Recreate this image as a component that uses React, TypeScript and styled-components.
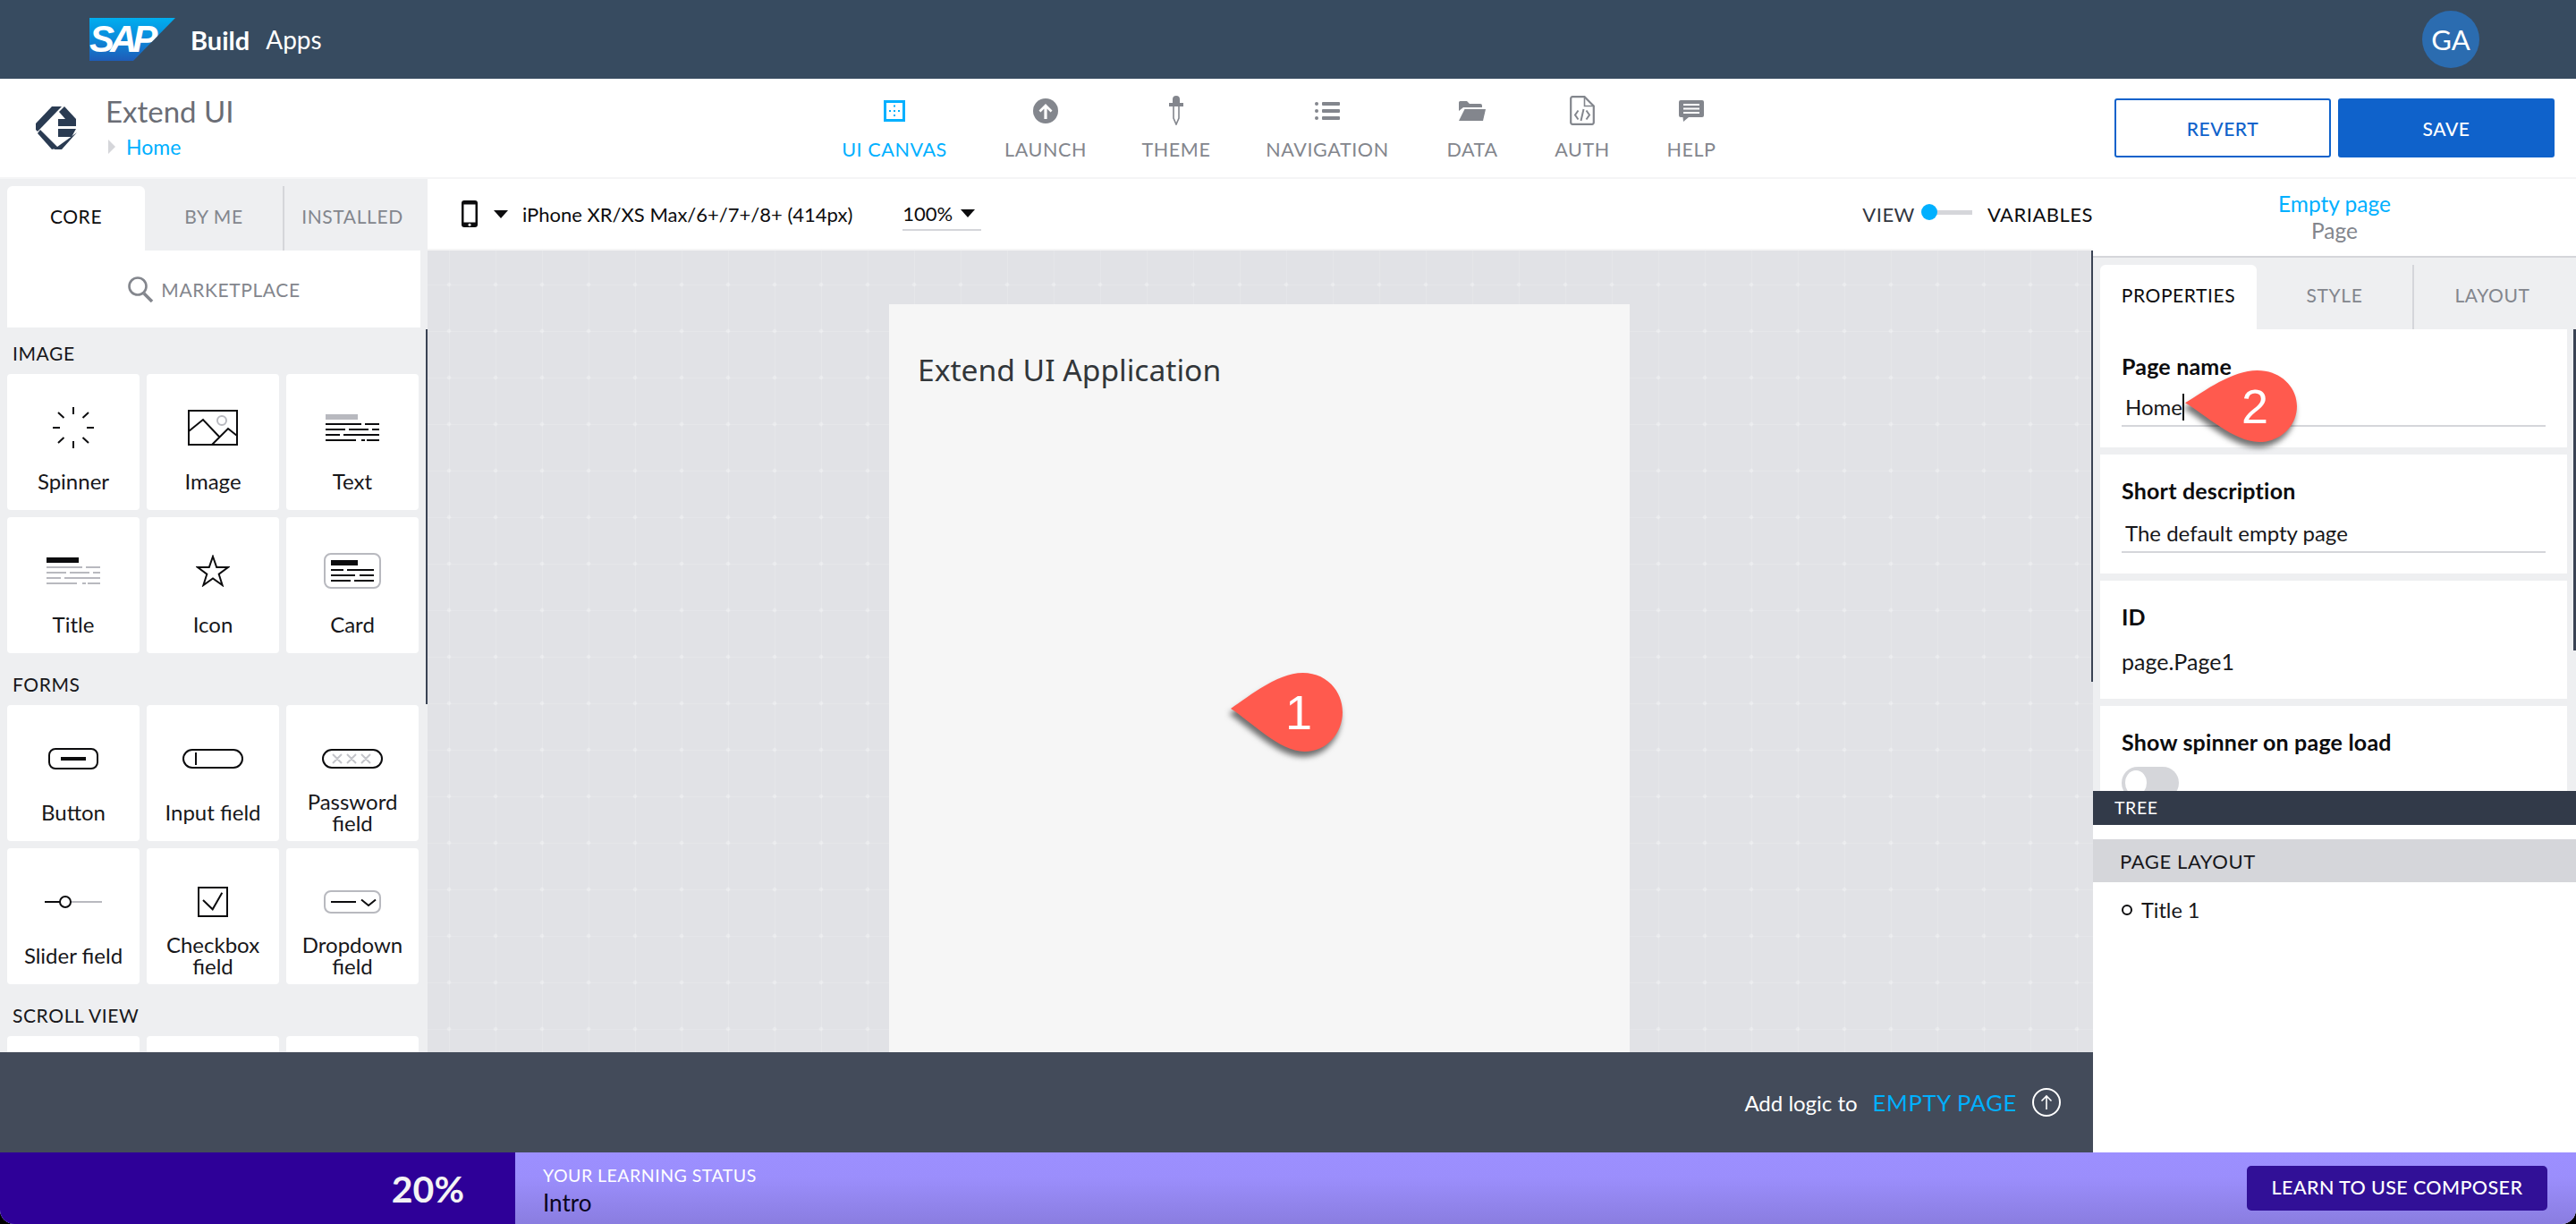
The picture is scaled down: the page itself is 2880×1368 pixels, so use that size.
import React from "react";
import styled, { createGlobalStyle } from "styled-components";

const Global = createGlobalStyle`
  html, body { margin: 0; padding: 0; background: #000; }
  * { box-sizing: border-box; }
  body { font-family: "Lato", "Open Sans", sans-serif; }
`;

const Shell = styled.div`
  width: 2880px; height: 1368px; display: flex; flex-direction: column;
  overflow: hidden; border-radius: 0 0 16px 16px; background: #fff; color: #0c0c0e;
`;

/* ---------- top bar ---------- */
const TopBar = styled.header`
  height: 88px; flex: none; background: #374b60; display: flex; align-items: center;
  padding: 0 108px 0 100px; color: #fff;
`;
const SapLogo = styled.div`
  position: relative; width: 96px; height: 48px; display: flex; align-items: center; padding-left: 0;
  background: linear-gradient(180deg, #00aeef 0%, #0a8ddc 45%, #1e5cb8 100%);
  clip-path: polygon(0 0, 100% 0, 51% 100%, 0 100%);
  font: italic 700 42px/1 "Liberation Sans", sans-serif; letter-spacing: -5px; color: #fff;
`;
const ProductBold = styled.span`font-size: 29px; font-weight: 700; margin-left: 17px;`;
const Product = styled.span`font-size: 28px; margin-left: 18px;`;
const Avatar = styled.div`
  margin-left: auto; width: 64px; height: 64px; border-radius: 50%; background: #2b6cb0;
  display: flex; align-items: center; justify-content: center; font-size: 31px;
`;

/* ---------- app bar ---------- */
const AppBar = styled.div`
  height: 112px; flex: none; display: flex; align-items: center;
  border-bottom: 2px solid #f5f5f6; background: #fff;
`;
const Brand = styled.div`width: 909px; flex: none; display: flex; align-items: center; padding-left: 40px; gap: 32px;`;
const BrandText = styled.div`display: flex; flex-direction: column; gap: 11px; margin-top: -2px;`;
const AppName = styled.div`font-size: 33px; line-height: 32px; color: #6a6d75;`;
const Crumb = styled.div`display: flex; align-items: center; gap: 12px; font-size: 23px; line-height: 26px; color: #00b0ff; padding-left: 3px;`;
const CrumbArrow = styled.i`
  width: 0; height: 0; border-left: 8px solid #d5d6da; border-top: 8px solid transparent; border-bottom: 8px solid transparent;
`;
const Nav = styled.nav`display: flex; align-items: stretch;`;
const NavItem = styled.div<{ $w: number; $active?: boolean }>`
  width: ${p => p.$w}px; display: flex; flex-direction: column; align-items: center; 
  color: ${p => (p.$active ? "#00b0ff" : "#83868d")}; font-size: 21.5px; line-height: 26px; letter-spacing: 0.6px;
`;
const NavIcon = styled.div`height: 38px; margin: -2px 0 11px; display: flex; align-items: center; justify-content: center;`;
const Actions = styled.div`margin-left: auto; display: flex; gap: 8px; padding-right: 24px;`;
const ActionButton = styled.button<{ $primary?: boolean }>`
  width: 242px; height: 66px; border-radius: 3px; border: 2px solid #0f62cb;
  background: ${p => (p.$primary ? "#0f62cb" : "#fff")}; color: ${p => (p.$primary ? "#fff" : "#0f62cb")};
  font: 500 21px/1 "Lato", sans-serif; letter-spacing: 0.6px;
`;

/* ---------- workspace ---------- */
const Workspace = styled.div`flex: 1; min-height: 0; display: flex;`;
const Main = styled.div`width: 2340px; flex: none; display: flex; flex-direction: column;`;
const MainBody = styled.div`flex: 1; min-height: 0; display: flex;`;

/* left panel */
const LeftPanel = styled.aside`
  position: relative; width: 478px; flex: none; background: #eeeff1; overflow: hidden; padding: 8px 0 0;
`;
const Tabs = styled.div<{ $cols: string }>`
  display: grid; grid-template-columns: ${p => p.$cols}; height: 72px;
`;
const Tab = styled.div<{ $active?: boolean; $divider?: boolean }>`
  display: flex; align-items: center; justify-content: center; padding-bottom: 6px;
  font-size: 21px; letter-spacing: 0.6px; color: ${p => (p.$active ? "#0c0c0e" : "#83868d")};
  background: ${p => (p.$active ? "#fff" : "transparent")};
  border-radius: ${p => (p.$active ? "6px 6px 0 0" : "0")};
  border-left: ${p => (p.$divider ? "2px solid #d5d6da" : "0")};
`;
const LeftTabs = styled(Tabs)`margin: 0 0 0 8px;`;
const Market = styled.div`
  margin: 0 8px; height: 86px; background: #fff; display: flex; align-items: center; justify-content: center;
  gap: 8px; font-size: 21px; letter-spacing: 0.6px; color: #83868d;
`;
const GroupLabel = styled.div<{ $first?: boolean }>`
  height: ${p => (p.$first ? 52 : 58)}px; padding: ${p => (p.$first ? 16 : 22)}px 0 0 14px;
  font-size: 21px; line-height: 26px; letter-spacing: 0.6px; color: #17171a;
`;
const WidgetGrid = styled.div`
  display: grid; grid-template-columns: repeat(3, 148px); grid-auto-rows: 152px; gap: 8px; padding-left: 8px;
`;
const WidgetCard = styled.div`
  background: #fff; border-radius: 4px; display: grid; grid-template-rows: 96px 48px; justify-items: center;
`;
const WidgetIcon = styled.div`padding-top: 24px; display: flex; align-items: center; justify-content: center;`;
const WidgetLabel = styled.div`
  display: flex; align-items: center; text-align: center; justify-content: center;
  font-size: 24px; line-height: 24px; color: #17171a; width: 124px;
`;
const ScrollMark = styled.div<{ $side: "left" | "right"; $top: number; $h: number; $w: number }>`
  position: absolute; ${p => p.$side}: 0; top: ${p => p.$top}px; height: ${p => p.$h}px; width: ${p => p.$w}px; background: #3a4354;
`;

/* center */
const Center = styled.div`flex: 1; min-width: 0; display: flex; flex-direction: column;`;
const CanvasBar = styled.div`
  height: 80px; flex: none; display: flex; align-items: center; padding: 0 0 0 38px; background: #fff;
  font-size: 22px; color: #0c0c0e; border-bottom: 2px solid #f5f5f6;
`;
const Caret = styled.i`
  display: block; width: 0; height: 0; border-left: 8px solid transparent; border-right: 8px solid transparent; border-top: 9px solid #0c0c0e;
`;
const DeviceGroup = styled.div`display: flex; align-items: center; gap: 18px;`;
const DeviceText = styled.span`margin-left: -2px; font-size: 22px;`;
const Zoom = styled.div`
  margin-left: 56px; width: 88px; height: 38px; display: flex; align-items: center; gap: 9px;
  border-bottom: 2px solid #d5d6da; font-size: 22px;
`;
const Switcher = styled.div`margin-left: auto; display: flex; align-items: center; font-size: 22px; letter-spacing: 0.5px;`;
const SwitcherView = styled.span`color: #32363f;`;
const Track = styled.div`
  position: relative; width: 56px; height: 5px; margin: 0 17px 4px 8px; background: #d5d6da;
  &::before { content: ""; position: absolute; left: -1px; top: -7px; width: 18px; height: 18px; border-radius: 50%; background: #00b0ff; }
`;
const Canvas = styled.div`
  position: relative; flex: 1; min-height: 0; overflow: hidden; display: flex; justify-content: center; padding-top: 60px;
  background-color: #e1e2e6;
  background-image:
    radial-gradient(circle, rgba(255,255,255,.28) 0, rgba(255,255,255,.28) 1.5px, transparent 3px),
    linear-gradient(rgba(255,255,255,.13) 1px, transparent 1px),
    linear-gradient(90deg, rgba(255,255,255,.13) 1px, transparent 1px);
  background-size: 52px 52px;
  background-position: -2px 12px, 0 38px, 24px 0;
`;
const Phone = styled.div`width: 828px; height: 1100px; flex: none; margin-right: 2px; background: #f6f6f6; padding: 50px 0 0 32px;`;
const PhoneTitle = styled.h1`margin: 0; font: 400 33.6px/46px "Noto Sans", sans-serif; color: #32363a;`;

const LogicBar = styled.div`
  height: 112px; flex: none; background: #434b5a; display: flex; align-items: center; justify-content: flex-end;
  padding-right: 36px; color: #fff; font-size: 24px;
`;
const LogicLink = styled.span`margin-left: 17px; color: #00b0ff; font-size: 25.5px; letter-spacing: 0.7px;`;
const LogicArrow = styled.span`margin-left: 17px; display: flex;`;

/* right panel */
const RightPanel = styled.aside`width: 540px; flex: none; display: flex; flex-direction: column; background: #fff;`;
const Inspect = styled.div`
  height: 88px; flex: none; border-bottom: 2px solid #d5d6da; display: flex; flex-direction: column; align-items: center;
  padding-top: 13px; font-size: 24.5px; line-height: 30px;
`;
const InspectName = styled.div`color: #00b0ff;`;
const InspectType = styled.div`color: #83868d;`;
const PropsArea = styled.div`position: relative; height: 596px; flex: none; background: #eeeff1; overflow: hidden; padding-top: 8px;`;
const RightTabs = styled(Tabs)`margin-left: 8px;`;
const PropCards = styled.div`display: flex; flex-direction: column; gap: 8px; width: 522px; margin-left: 8px;`;
const PropCard = styled.section<{ $h: number }>`
  height: ${p => p.$h}px; flex: none; background: #fff; padding: 0 24px;
`;
const PropLabel = styled.div<{ $top: number }>`
  padding-top: ${p => p.$top}px; font-size: 25px; line-height: 28px; font-weight: 700; letter-spacing: 0.2px; color: #0c0c0e;
`;
const PropValue = styled.div<{ $top: number; $indent?: number; $size: number }>`
  margin-top: ${p => p.$top}px; padding: 0 0 5px ${p => p.$indent ?? 0}px; font-size: ${p => p.$size}px; line-height: 30px; color: #17171a;
`;
const InputValue = styled(PropValue)`border-bottom: 2px solid #d5d6da;`;
const TextCaret = styled.span`display: inline-block; width: 0; height: 30px; border-left: 2px solid #111; vertical-align: top;`;
const Toggle = styled.div`
  margin-top: 14px; width: 64px; height: 36px; border-radius: 18px; background: #d5d6da; position: relative;
  &::after { content: ""; position: absolute; left: 4px; top: 4px; width: 24px; height: 28px; border-radius: 50%; background: #fff; }
`;
const TreeBar = styled.div`
  height: 38px; flex: none; background: #323a49; color: #fff; font-size: 19.5px; letter-spacing: 0.6px;
  display: flex; align-items: center; padding: 0 0 2px 24px;
`;
const LayoutHead = styled.div`
  margin-top: 16px; height: 48px; flex: none; background: #d5d6da; display: flex; align-items: center;
  padding-left: 30px; font-size: 22px; letter-spacing: 0.6px; color: #17171a;
`;
const TreeRow = styled.div`display: flex; align-items: center; gap: 10px; padding: 17px 0 0 32px; font-size: 23.5px; line-height: 28px; color: #17171a;`;
const TreeDot = styled.i`width: 12px; height: 12px; border-radius: 50%; border: 2px solid #0c0c0e;`;

/* learning bar */
const LearnBar = styled.footer`
  height: 80px; flex: none; display: flex; align-items: stretch;
  background: linear-gradient(180deg, #9c8fff 0%, #9b8efc 35%, #8a7de0 100%);
`;
const Progress = styled.div`
  width: 576px; flex: none; background: #2e0098; color: #f4f4f4; display: flex; align-items: center; justify-content: flex-end;
  padding: 0 57px 0 0; font-size: 41px; font-weight: 700;
`;
const Status = styled.div`display: flex; flex-direction: column; padding: 14px 0 0 31px;`;
const StatusLabel = styled.div`font-size: 19.5px; line-height: 24px; letter-spacing: 0.5px; color: #fff;`;
const StatusValue = styled.div`margin-top: 2px; font-size: 26px; line-height: 32px; color: #0a0520;`;
const LearnButton = styled.button`
  margin: 15px 32px 15px auto; width: 336px; border: 0; border-radius: 5px; background: #311097; color: #fff;
  font: 500 21.5px/1 "Lato", sans-serif; letter-spacing: 0.4px;
`;

/* callouts */
const Callout = styled.div<{ $x: number; $y: number; $w: number; $h: number }>`
  position: absolute; left: ${p => p.$x}px; top: ${p => p.$y}px; width: ${p => p.$w}px; height: ${p => p.$h}px;
  display: flex; align-items: center; justify-content: flex-end;
`;
const CalloutShape = styled.svg`
  position: absolute; inset: 0; width: 100%; height: 100%; overflow: visible;
  filter: drop-shadow(-2px 6px 3px rgba(0,0,0,.55));
`;
const CalloutNumber = styled.span<{ $pad: number }>`
  position: relative; padding-right: ${p => p.$pad}px; font: 400 54px/1 "Liberation Sans", sans-serif; color: #fff;
`;
const Stage = styled.div`position: relative; width: 2880px; height: 1368px;`;

/* ---------- icons ---------- */
const Lines = ({ bar, line }: { bar: string; line: string }) => (
  <svg width="60" height="30" viewBox="0 0 60 30">
    <rect width="36" height="6" fill={bar} />
    <g stroke={line} strokeWidth="2">
      <path d="M0 11H40M44 11H60M0 17H22M26 17H48M52 17H60M0 23H16M20 23H60M0 29H34M40 29H44M46 29H60" />
    </g>
  </svg>
);
const icons: Record<string, React.ReactNode> = {
  Spinner: (
    <svg width="46" height="46" viewBox="0 0 46 46" stroke="#0c0c0e" strokeWidth="2" fill="none">
      <path d="M23 0V8M23 38V46M0 23H8M38 23H46M6 6L12.5 12M40 6L33.5 12M6 40L12.5 34M40 40L33.5 34" />
    </svg>
  ),
  Image: (
    <svg width="56" height="40" viewBox="0 0 56 40" fill="none" stroke="#0c0c0e" strokeWidth="2">
      <rect x="1" y="1" width="54" height="38" />
      <path d="M1 24L17 11L35 30M27 39L45 21L55 29" />
      <circle cx="38" cy="12" r="5" stroke="#b8b9bf" />
    </svg>
  ),
  Text: <Lines bar="#b8b9bf" line="#0c0c0e" />,
  Title: <Lines bar="#0c0c0e" line="#b8b9bf" />,
  Icon: (
    <svg width="38" height="36" viewBox="0 0 38 36" fill="none" stroke="#0c0c0e" strokeWidth="2">
      <path d="M19 2L23.2 14H36L25.7 21.7L29.6 34L19 26.5L8.4 34L12.3 21.7L2 14H14.8Z" />
    </svg>
  ),
  Card: (
    <svg width="64" height="40" viewBox="0 0 64 40" fill="none">
      <rect x="1" y="1" width="62" height="38" rx="7" stroke="#b8b9bf" strokeWidth="2" />
      <rect x="8" y="8" width="30" height="6" fill="#0c0c0e" />
      <path d="M8 19H22M26 19H56M8 25H35M40 25H56M8 31H30M34 31H56" stroke="#0c0c0e" strokeWidth="2" />
    </svg>
  ),
  Button: (
    <svg width="56" height="24" viewBox="0 0 56 24" fill="none">
      <rect x="1" y="1" width="54" height="22" rx="7" stroke="#0c0c0e" strokeWidth="2" />
      <rect x="14" y="10" width="28" height="4" fill="#0c0c0e" />
    </svg>
  ),
  "Input field": (
    <svg width="68" height="22" viewBox="0 0 68 22" fill="none" stroke="#0c0c0e" strokeWidth="2">
      <rect x="1" y="1" width="66" height="20" rx="10" />
      <path d="M15 4V18" />
    </svg>
  ),
  "Password field": (
    <svg width="68" height="22" viewBox="0 0 68 22" fill="none">
      <rect x="1" y="1" width="66" height="20" rx="10" stroke="#0c0c0e" strokeWidth="2" />
      <path d="M12 6L22 16M22 6L12 16M28 6L38 16M38 6L28 16M44 6L54 16M54 6L44 16" stroke="#c4c5ca" strokeWidth="2" />
    </svg>
  ),
  "Slider field": (
    <svg width="64" height="14" viewBox="0 0 64 14" fill="none">
      <path d="M0 7H17" stroke="#0c0c0e" strokeWidth="2" />
      <path d="M29 7H64" stroke="#b8b9bf" strokeWidth="2" />
      <circle cx="23" cy="7" r="6" stroke="#0c0c0e" strokeWidth="2" />
    </svg>
  ),
  "Checkbox field": (
    <svg width="34" height="34" viewBox="0 0 34 34" fill="none" stroke="#0c0c0e" strokeWidth="2">
      <rect x="1" y="1" width="32" height="32" />
      <path d="M6 15L16.7 25.3L27.3 6.7" />
    </svg>
  ),
  "Dropdown field": (
    <svg width="64" height="26" viewBox="0 0 64 26" fill="none">
      <rect x="1" y="1" width="62" height="24" rx="7" stroke="#b8b9bf" strokeWidth="2" />
      <path d="M8 13H36M42 10.5L50 17L58 10.5" stroke="#0c0c0e" strokeWidth="2" />
    </svg>
  ),
};

const navItems: { label: string; w: number; active?: boolean; icon: React.ReactNode }[] = [
  {
    label: "UI CANVAS", w: 182, active: true,
    icon: (
      <svg width="24" height="24" viewBox="0 0 24 24">
        <rect x="1.5" y="1.5" width="21" height="21" fill="none" stroke="#00b0ff" strokeWidth="3" />
        <path d="M11 5.5h2v2h-2zM11 11h2v2h-2zM11 16h2v2h-2zM6 11h2v2H6zM16 11h2v2h-2z" fill="#00b0ff" />
      </svg>
    ),
  },
  {
    label: "LAUNCH", w: 156,
    icon: (
      <svg width="28" height="28" viewBox="0 0 28 28">
        <circle cx="14" cy="14" r="14" fill="#83868d" />
        <path d="M14 6L21.5 13.5L19.6 15.4L15.6 11.6V23H12.4V11.6L8.4 15.4L6.5 13.5Z" fill="#fff" />
      </svg>
    ),
  },
  {
    label: "THEME", w: 136,
    icon: (
      <svg width="16" height="33" viewBox="0 0 16 33">
        <path d="M4 8V4a4 4 0 0 1 8 0v4h4v4H0V8z" fill="#83868d" />
        <path d="M5 12V25L8 32L11 25V12" fill="#fff" stroke="#83868d" strokeWidth="1.6" />
      </svg>
    ),
  },
  {
    label: "NAVIGATION", w: 202,
    icon: (
      <svg width="28" height="20" viewBox="0 0 28 20" fill="#83868d">
        <circle cx="2" cy="2" r="2" /><circle cx="2" cy="10" r="2" /><circle cx="2" cy="18" r="2" />
        <rect x="8" y="0" width="20" height="4" rx="1" /><rect x="8" y="8" width="20" height="4" rx="1" /><rect x="8" y="16" width="20" height="4" rx="1" />
      </svg>
    ),
  },
  {
    label: "DATA", w: 122,
    icon: (
      <svg width="30" height="22" viewBox="0 0 30 22" fill="#83868d">
        <path d="M0 11V1.5A1.5 1.5 0 0 1 1.5 0H9l3 3h12a2 2 0 0 1 2 2v2H5z" />
        <path d="M6.5 9H30l-3 13H0z" />
      </svg>
    ),
  },
  {
    label: "AUTH", w: 124,
    icon: (
      <svg width="28" height="33" viewBox="0 0 28 33" fill="none" stroke="#83868d">
        <path d="M16.5 1.2H3A1.8 1.8 0 0 0 1.2 3V30A1.8 1.8 0 0 0 3 31.8H25A1.8 1.8 0 0 0 26.8 30V11.5Z" strokeWidth="2.2" />
        <path d="M16.5 1.2V11.5H26.8" strokeWidth="1.6" />
        <path d="M9.5 16.5L6 21.5L9.5 26.5M18.5 16.5L22 21.5L18.5 26.5M15.5 15L12.5 28" strokeWidth="2" />
      </svg>
    ),
  },
  {
    label: "HELP", w: 120,
    icon: (
      <svg width="28" height="24" viewBox="0 0 28 24">
        <path d="M2 0H26a2 2 0 0 1 2 2V17a2 2 0 0 1-2 2H11L5 24L4.500 19H2a2 2 0 0 1-2-2V2A2 2 0 0 1 2 0Z" fill="#83868d" />
        <path d="M5 5H23M5 9.500H23M5 14H23" stroke="#fff" strokeWidth="2" />
      </svg>
    ),
  },
];

const groups = [
  { title: "IMAGE", items: ["Spinner", "Image", "Text", "Title", "Icon", "Card"] },
  { title: "FORMS", items: ["Button", "Input field", "Password field", "Slider field", "Checkbox field", "Dropdown field"] },
  { title: "SCROLL VIEW", items: ["", "", ""] },
];

const Drop = ({ d }: { d: string }) => (
  <CalloutShape viewBox="0 0 124 88" preserveAspectRatio="none">
    <path d={d} fill="#ff5a4e" />
  </CalloutShape>
);
const dropPath = "M0 40C22 25 52 0 80 0C106 0 124 20 124 44C124 68 106 88 82 88C54 88 22 54 0 40Z";

export default function App() {
  return (
    <Stage>
      <Global />
      <Shell>
        <TopBar>
          <SapLogo>SAP</SapLogo>
          <ProductBold>Build</ProductBold>
          <Product>Apps</Product>
          <Avatar>GA</Avatar>
        </TopBar>

        <AppBar>
          <Brand>
            <svg width="46" height="48" viewBox="0 0 46 48" fill="#2a3b52">
              <path d="M0 19L18 0H29L2 28L0 26Z" />
              <path d="M26 6L32 0L45 14H33Z" />
              <path d="M25 14H45V22H25Z" />
              <path d="M25 25H45L40 34H25Z" />
              <path d="M2 30L5 26L25 46L18 48Z" />
              <path d="M20 48H29L46 29L38 35Z" />
            </svg>
            <BrandText>
              <AppName>Extend UI</AppName>
              <Crumb><CrumbArrow />Home</Crumb>
            </BrandText>
          </Brand>
          <Nav>
            {navItems.map(n => (
              <NavItem key={n.label} $w={n.w} $active={n.active}>
                <NavIcon>{n.icon}</NavIcon>
                {n.label}
              </NavItem>
            ))}
          </Nav>
          <Actions>
            <ActionButton>REVERT</ActionButton>
            <ActionButton $primary>SAVE</ActionButton>
          </Actions>
        </AppBar>

        <Workspace>
          <Main>
            <MainBody>
              <LeftPanel>
                <LeftTabs $cols="154px 154px 154px">
                  <Tab $active>CORE</Tab>
                  <Tab>BY ME</Tab>
                  <Tab $divider>INSTALLED</Tab>
                </LeftTabs>
                <Market>
                  <svg width="30" height="30" viewBox="0 0 30 30" fill="none" stroke="#83868d">
                    <circle cx="12" cy="12" r="9.500" strokeWidth="2.600" />
                    <path d="M19 20L28 29" strokeWidth="3.500" />
                  </svg>
                  MARKETPLACE
                </Market>
                {groups.map((g, gi) => (
                  <React.Fragment key={g.title}>
                    <GroupLabel $first={gi === 0}>{g.title}</GroupLabel>
                    <WidgetGrid>
                      {g.items.map((it, i) => (
                        <WidgetCard key={i}>
                          <WidgetIcon>{icons[it]}</WidgetIcon>
                          <WidgetLabel>{it}</WidgetLabel>
                        </WidgetCard>
                      ))}
                    </WidgetGrid>
                  </React.Fragment>
                ))}
                <ScrollMark $side="right" $top={168} $h={419} $w={2} />
              </LeftPanel>

              <Center>
                <CanvasBar>
                  <DeviceGroup>
                    <svg width="18" height="30" viewBox="0 0 18 30">
                      <rect width="18" height="30" rx="3" fill="#0c0c0e" />
                      <rect x="2.500" y="4.500" width="13" height="20" fill="#fff" />
                      <circle cx="9" cy="27.200" r="1.500" fill="#fff" />
                    </svg>
                    <Caret />
                    <DeviceText>iPhone XR/XS Max/6+/7+/8+ (414px)</DeviceText>
                  </DeviceGroup>
                  <Zoom>100%<Caret /></Zoom>
                  <Switcher>
                    <SwitcherView>VIEW</SwitcherView>
                    <Track />
                    VARIABLES
                  </Switcher>
                </CanvasBar>
                <Canvas>
                  <Phone>
                    <PhoneTitle>Extend UI Application</PhoneTitle>
                  </Phone>
                  <ScrollMark $side="right" $top={0} $h={482} $w={2} />
                </Canvas>
              </Center>
            </MainBody>
            <LogicBar>
              Add logic to
              <LogicLink>EMPTY PAGE</LogicLink>
              <LogicArrow>
                <svg width="32" height="32" viewBox="0 0 32 32" fill="none" stroke="#fff" strokeWidth="2">
                  <circle cx="16" cy="16" r="15" />
                  <path d="M16 24V9M10.500 14.500L16 9L21.500 14.500" strokeWidth="1.600" />
                </svg>
              </LogicArrow>
            </LogicBar>
          </Main>

          <RightPanel>
            <Inspect>
              <InspectName>Empty page</InspectName>
              <InspectType>Page</InspectType>
            </Inspect>
            <PropsArea>
              <RightTabs $cols="175px 174px 177px">
                <Tab $active>PROPERTIES</Tab>
                <Tab>STYLE</Tab>
                <Tab $divider>LAYOUT</Tab>
              </RightTabs>
              <PropCards>
                <PropCard $h={132}>
                  <PropLabel $top={27}>Page name</PropLabel>
                  <InputValue $top={17} $indent={4} $size={24}>Home<TextCaret /></InputValue>
                </PropCard>
                <PropCard $h={133}>
                  <PropLabel $top={26}>Short description</PropLabel>
                  <InputValue $top={19} $indent={4} $size={24}>The default empty page</InputValue>
                </PropCard>
                <PropCard $h={132}>
                  <PropLabel $top={26}>ID</PropLabel>
                  <PropValue $top={21} $size={25}>page.Page1</PropValue>
                </PropCard>
                <PropCard $h={120}>
                  <PropLabel $top={26}>Show spinner on page load</PropLabel>
                  <Toggle />
                </PropCard>
              </PropCards>
              <ScrollMark $side="right" $top={80} $h={359} $w={3} />
            </PropsArea>
            <TreeBar>TREE</TreeBar>
            <LayoutHead>PAGE LAYOUT</LayoutHead>
            <TreeRow><TreeDot />Title 1</TreeRow>
          </RightPanel>
        </Workspace>

        <LearnBar>
          <Progress>20%</Progress>
          <Status>
            <StatusLabel>YOUR LEARNING STATUS</StatusLabel>
            <StatusValue>Intro</StatusValue>
          </Status>
          <LearnButton>LEARN TO USE COMPOSER</LearnButton>
        </LearnBar>
      </Shell>

      <Callout $x={1376} $y={752} $w={125} $h={88}>
        <Drop d={dropPath} />
        <CalloutNumber $pad={34}>1</CalloutNumber>
      </Callout>
      <Callout $x={2443} $y={414} $w={125} $h={80}>
        <Drop d={dropPath} />
        <CalloutNumber $pad={32}>2</CalloutNumber>
      </Callout>
    </Stage>
  );
}
